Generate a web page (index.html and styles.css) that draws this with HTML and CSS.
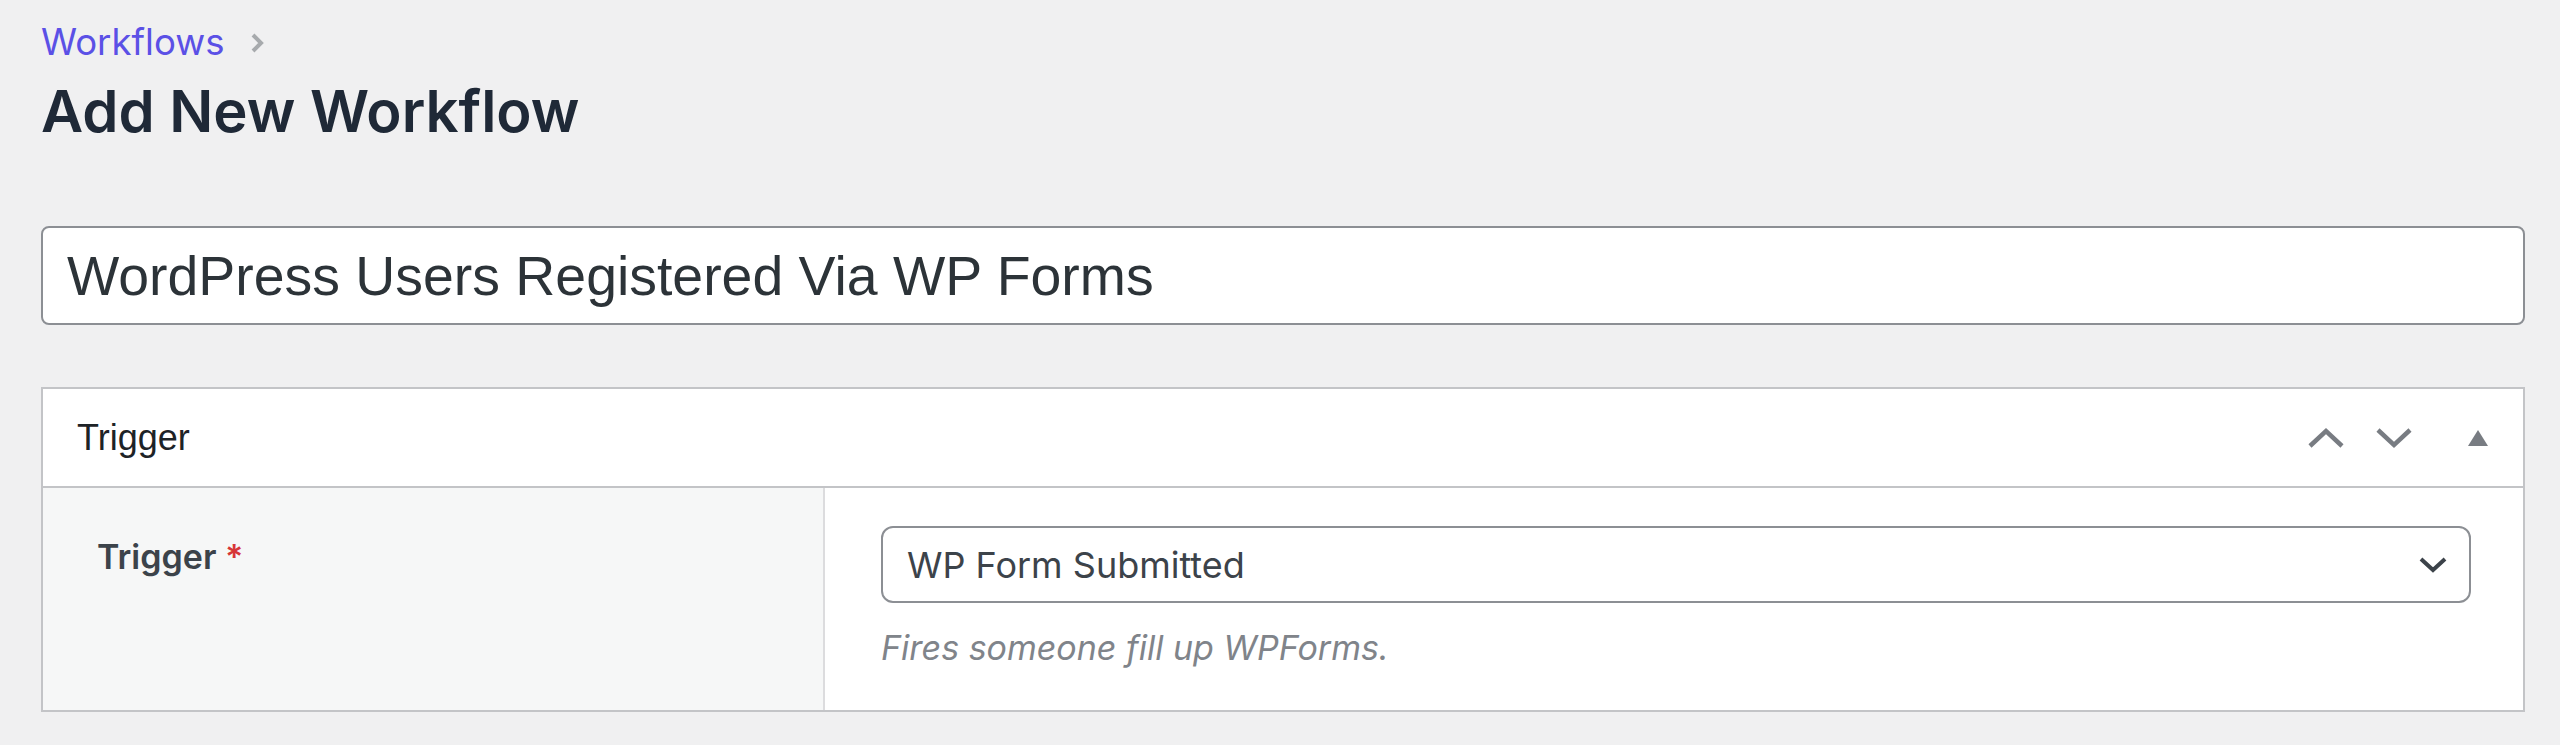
FILE: index.html
```html
<!DOCTYPE html>
<html lang="en">

<head>
    <meta charset="UTF-8">
    <meta name="viewport" content="width=device-width, initial-scale=1.0">
    <title>Add New Workflow</title>
    <link rel="stylesheet" href="styles.css">
</head>

<body>
    <div class="wrap">
        <!-- 面包屑 -->
        <div class="crumbs">
            <a href="#" class="crumb-link">Workflows</a>
            <svg class="crumb-sep" width="18" height="24" viewBox="0 0 18 24">
                <path d="M5 4 L13 12 L5 20" fill="none" stroke="#a7aaad" stroke-width="4" />
            </svg>
        </div>
        <h1 class="page-title">Add New Workflow</h1>

        <!-- 工作流名称 -->
        <input class="title-input" type="text" value="WordPress Users Registered Via WP Forms">

        <!-- 触发器面板 -->
        <div class="postbox">
            <div class="postbox-head">
                <h2 class="postbox-title">Trigger</h2>
                <div class="postbox-tools">
                    <svg class="tool" width="38" height="22" viewBox="0 0 38 22">
                        <path d="M3 19 L19 4 L35 19" fill="none" stroke="#787c82" stroke-width="4.5" />
                    </svg>
                    <svg class="tool" width="38" height="22" viewBox="0 0 38 22">
                        <path d="M3 3 L19 18 L35 3" fill="none" stroke="#787c82" stroke-width="4.5" />
                    </svg>
                    <svg class="tool tool-toggle" width="20" height="16" viewBox="0 0 20 16">
                        <path d="M10 0 L20 16 L0 16 Z" fill="#787c82" />
                    </svg>
                </div>
            </div>
            <div class="postbox-body">
                <div class="field-label">
                    <label>Trigger <span class="required">*</span></label>
                </div>
                <div class="field-input">
                    <div class="select">
                        <span>WP Form Submitted</span>
                        <svg width="30" height="18" viewBox="0 0 30 18">
                            <path d="M3 3 L15 14 L27 3" fill="none" stroke="#3c434a" stroke-width="4" />
                        </svg>
                    </div>
                    <p class="description">Fires someone fill up WPForms.</p>
                </div>
            </div>
        </div>
    </div>
</body>

</html>
```

FILE: styles.css
```css
* {
    margin: 0;
    padding: 0;
    box-sizing: border-box;
}

body {
    background: #f0f0f1;
    font-family: Inter, "Noto Sans", sans-serif;
    color: #1e293b;
}

.wrap {
    padding: 20px 35px 0 41px;
}

.crumbs {
    display: flex;
    align-items: center;
    gap: 24px;
    height: 44px;
}

.crumb-link {
    font-size: 36.6px;
    line-height: 44px;
    color: #5b50e6;
    text-decoration: none;
}

.crumb-sep {
    margin-top: 2px;
}

.page-title {
    margin-top: 12px;
    font-size: 58px;
    line-height: 70px;
    font-weight: 600;
    color: #1f2937;
}

.title-input {
    display: block;
    width: 100%;
    height: 99px;
    margin-top: 80px;
    padding: 0 24px;
    border: 2px solid #8c8f94;
    border-radius: 8px;
    background: #fff;
    font-family: "Liberation Sans", Arial, sans-serif;
    font-size: 55.4px;
    color: #2c3338;
    outline: none;
}

.postbox {
    margin-top: 62px;
    background: #fff;
    border: 2px solid #c3c4c7;
}

.postbox-head {
    display: flex;
    align-items: center;
    justify-content: space-between;
    height: 99px;
    padding: 0 35px 0 34px;
    border-bottom: 2px solid #c3c4c7;
}

.postbox-title {
    font-family: "Liberation Sans", Arial, sans-serif;
    font-size: 36px;
    font-weight: 400;
    color: #1d2327;
}

.postbox-tools {
    display: flex;
    align-items: center;
    gap: 30px;
}

.tool-toggle {
    margin-left: 25px;
}

.postbox-body {
    display: flex;
    height: 222px;
}

.field-label {
    width: 782px;
    padding: 47px 0 0 54px;
    background: #f6f7f7;
    border-right: 2px solid #dcdcde;
}

.field-label label {
    font-size: 34px;
    line-height: 44px;
    font-weight: 600;
    color: #3c434a;
}

.required {
    color: #d63638;
}

.field-input {
    flex: 1;
    padding: 38px 52px 0 56px;
}

.select {
    display: flex;
    align-items: center;
    justify-content: space-between;
    height: 77px;
    padding: 0 21px 0 24px;
    border: 2px solid #8c8f94;
    border-radius: 12px;
    font-size: 36px;
    color: #3c434a;
}

.description {
    margin-top: 25px;
    font-size: 34px;
    line-height: 40px;
    font-style: italic;
    color: #80848a;
}
```
